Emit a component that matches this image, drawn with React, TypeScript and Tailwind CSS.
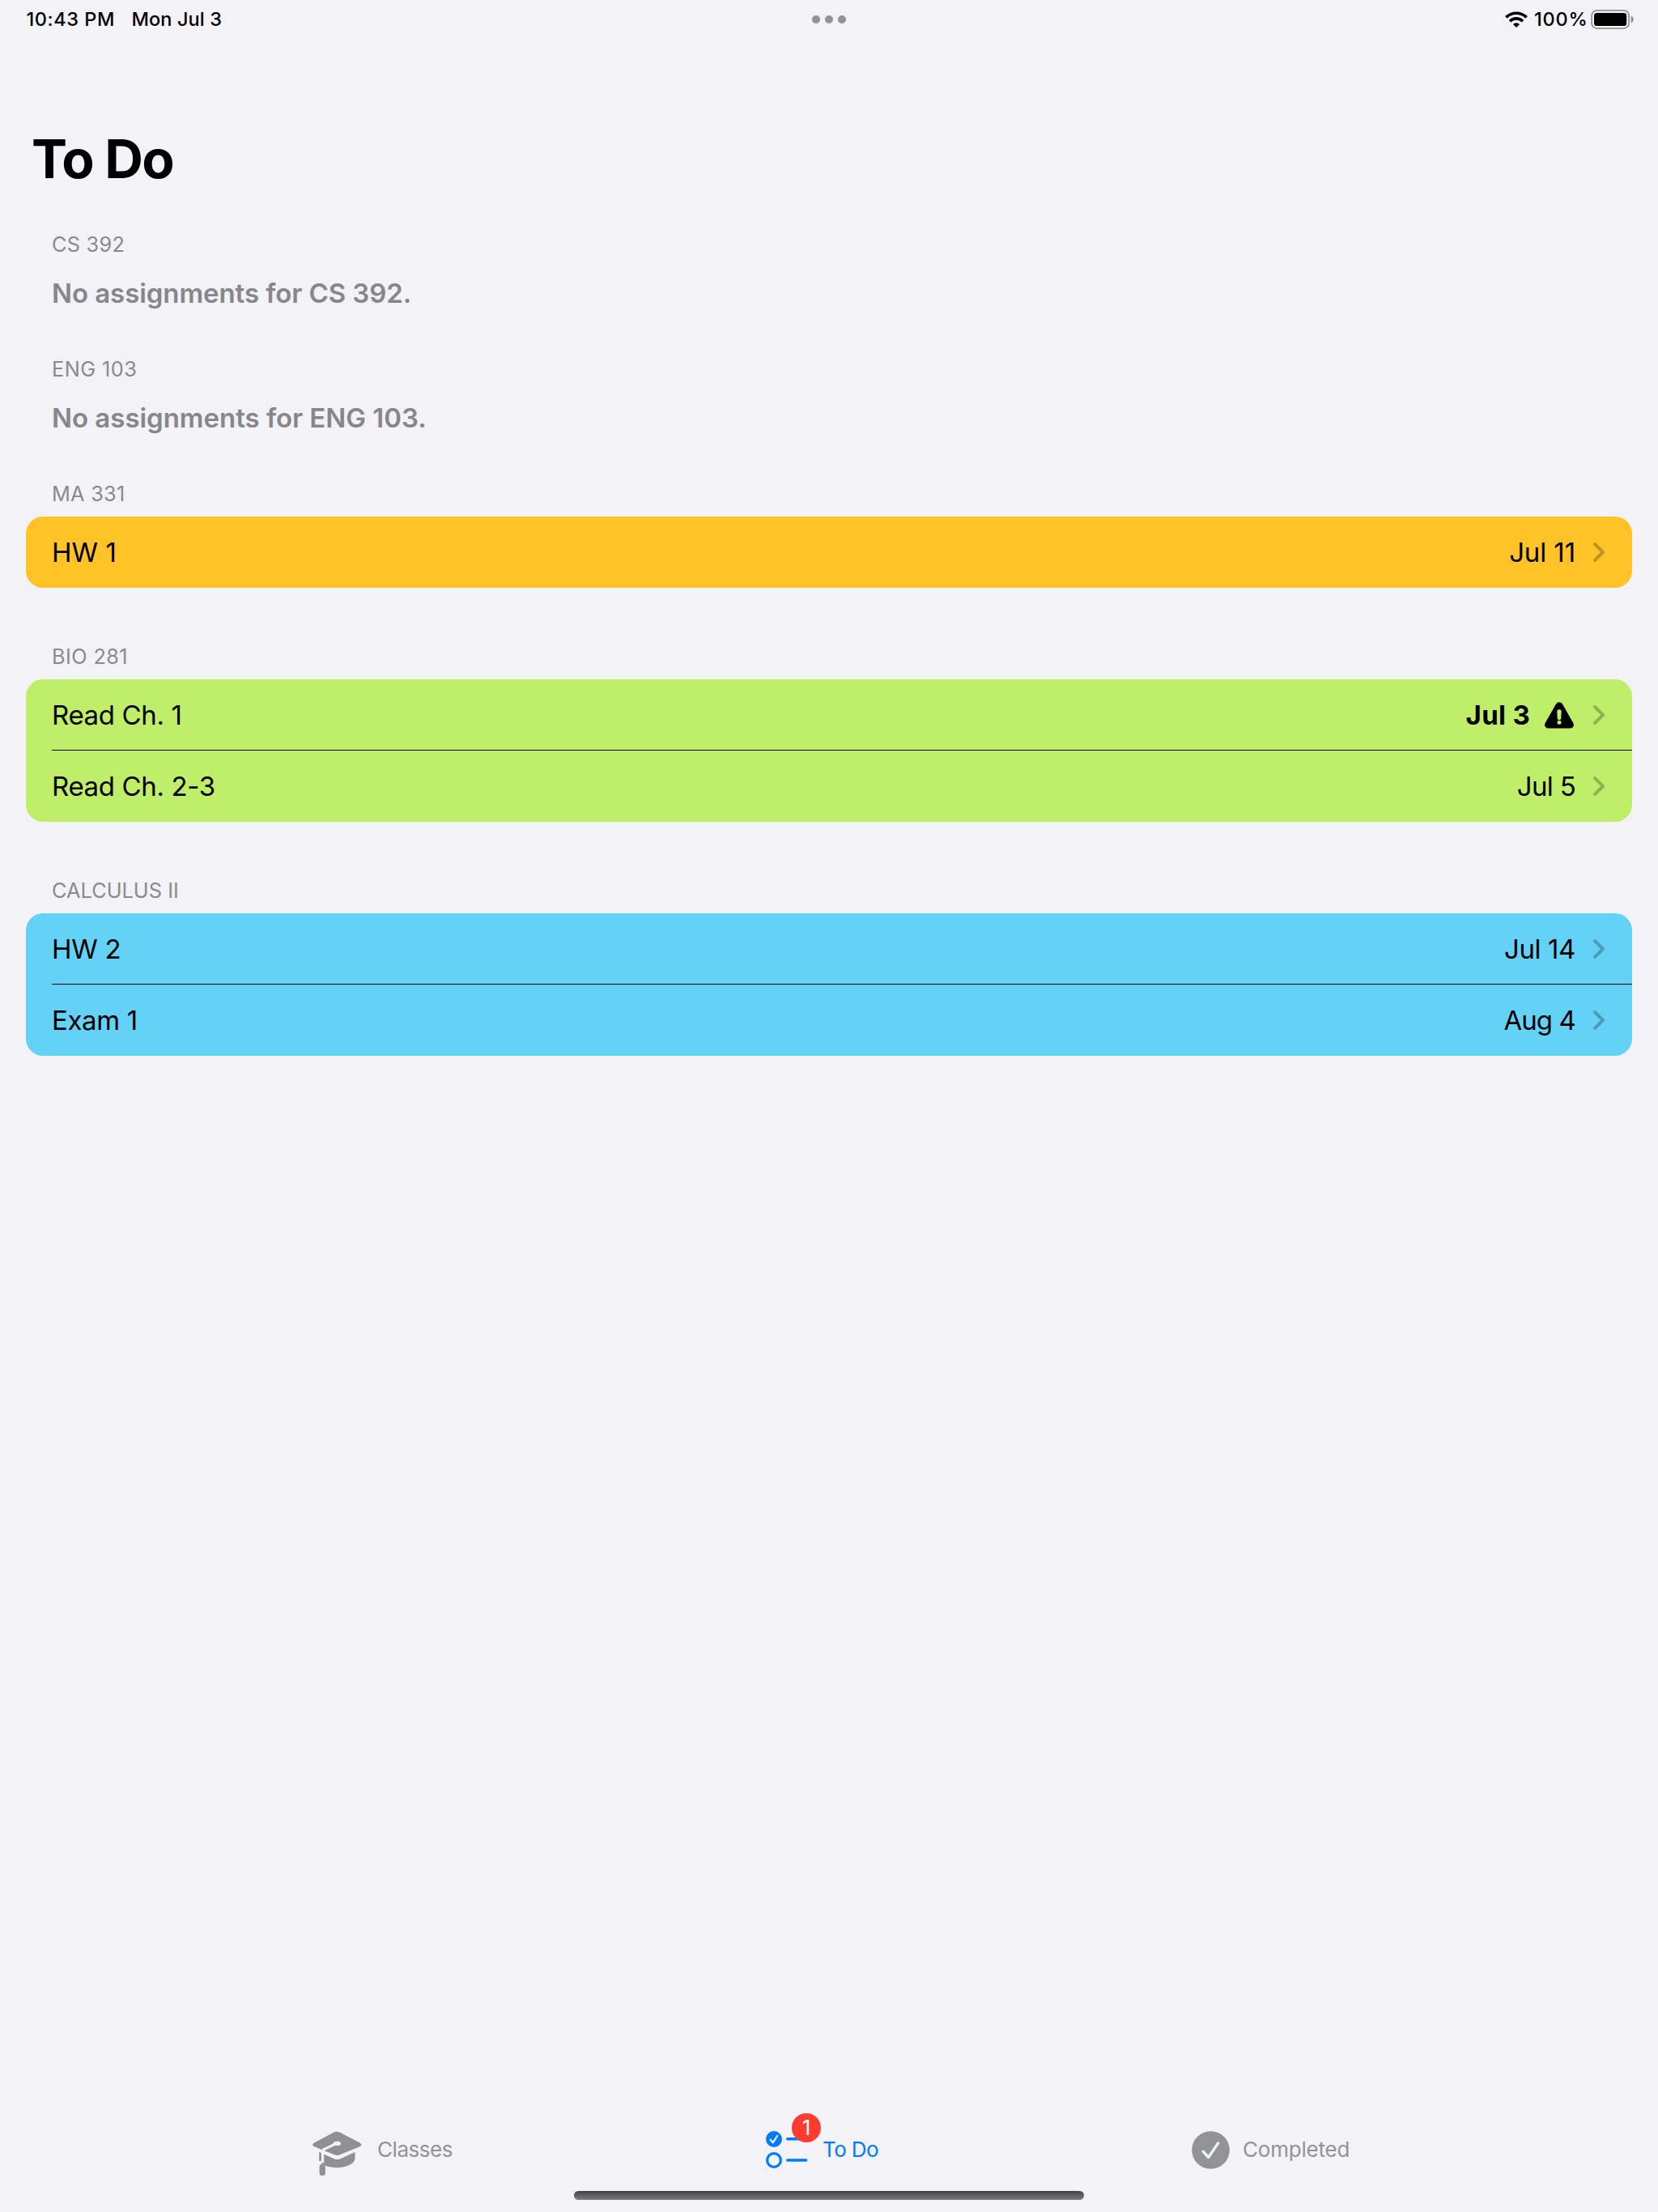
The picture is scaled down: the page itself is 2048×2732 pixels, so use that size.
type Item = {
  name: string;
  nameTracking: string;
  due: string;
  dueTracking: string;
  urgent?: boolean;
};

type Course = {
  code: string;
  codeTracking: string;
  color?: string;
  emptyTracking?: string;
  items: Item[];
};

const courses: Course[] = [
  { code: "CS 392", codeTracking: "tracking-[0.25px]", emptyTracking: "tracking-[-0.08px]", items: [] },
  { code: "ENG 103", codeTracking: "tracking-[0.45px]", emptyTracking: "tracking-[-0.03px]", items: [] },
  {
    code: "MA 331",
    codeTracking: "tracking-[0.25px]",
    color: "bg-[#ffc227]",
    items: [
      { name: "HW 1", nameTracking: "tracking-[0.1px]", due: "Jul 11", dueTracking: "tracking-[-0.1px]" },
    ],
  },
  {
    code: "BIO 281",
    codeTracking: "tracking-[0.4px]",
    color: "bg-[#bfee69]",
    items: [
      { name: "Read Ch. 1", nameTracking: "tracking-[-0.35px]", due: "Jul 3", dueTracking: "tracking-[0.3px]", urgent: true },
      { name: "Read Ch. 2-3", nameTracking: "tracking-[-0.36px]", due: "Jul 5", dueTracking: "tracking-[-0.7px]" },
    ],
  },
  {
    code: "CALCULUS II",
    codeTracking: "tracking-[0.04px]",
    color: "bg-[#64d1f7]",
    items: [
      { name: "HW 2", nameTracking: "tracking-[-0.25px]", due: "Jul 14", dueTracking: "tracking-[-0.4px]" },
      { name: "Exam 1", nameTracking: "tracking-[-0.37px]", due: "Aug 4", dueTracking: "tracking-[-0.9px]" },
    ],
  },
];

function WifiIcon() {
  return (
    <svg width="28" height="20" viewBox="0 0 28 20" fill="none" stroke="#000" strokeWidth="3.6">
      <path d="M1.4 7.4a18 18 0 0 1 25.2 0" />
      <path d="M6 12.2a11.4 11.4 0 0 1 16 0" />
      <path d="M14 20l-4-4.1a5.8 5.8 0 0 1 8 0z" fill="#000" stroke="none" />
    </svg>
  );
}

function BatteryIcon() {
  return (
    <svg width="54" height="24" viewBox="0 0 54 24">
      <rect x="1.1" y="0.9" width="46" height="22.2" rx="6.4" fill="none" stroke="#949498" strokeWidth="1.8" />
      <rect x="4" y="4" width="40.2" height="16" rx="3.6" fill="#000" />
      <path d="M49.6 7.6c2 .6 3.3 2.3 3.3 4.4s-1.3 3.8-3.3 4.4z" fill="#949498" />
    </svg>
  );
}

function Chevron() {
  return (
    <svg width="16" height="26" viewBox="0 0 16 26" fill="none" stroke="#000" strokeOpacity="0.25" strokeWidth="3.9" strokeLinecap="round" strokeLinejoin="round">
      <path d="M3 3l10 10-10 10" />
    </svg>
  );
}

function WarningIcon() {
  return (
    <svg width="36" height="33" viewBox="0 0 36 33">
      <path
        d="M18 .3c1.8 0 3.2.9 4.1 2.5l13.1 23c.5.9.7 1.7.7 2.5 0 2.5-1.8 4.3-4.5 4.3H4.6C1.9 32.6.1 30.8.1 28.3c0-.8.2-1.6.7-2.5l13.1-23C14.8 1.2 16.2.3 18 .3z"
        fill="#000"
      />
      <path d="M15.3 11.6c0-1.5 1.1-2.3 2.7-2.3s2.7.8 2.7 2.3l-.4 8.3c-.1 1.4-.9 2.1-2.3 2.1s-2.2-.7-2.3-2.1z" fill="#bfee69" />
      <circle cx="18" cy="25.2" r="2.5" fill="#bfee69" />
    </svg>
  );
}

function GraduationCap() {
  return (
    <svg width="62" height="56" viewBox="0 0 62 56">
      <path d="M9.2 24v12.5C12.5 42 21 45.2 31.5 45.2c11.5 0 22-5 22-11.7V24z" fill="#8f9094" />
      <path
        d="M27 1.8c2.8-1.3 5.2-1.3 8 0l24.3 12.6c3.2 1.7 3.2 3.9 0 5.6L35.5 31.3c-2.8 1.3-5.2 1.3-8 0L3.3 20.1c-3.2-1.7-3.2-4 0-5.7z"
        fill="#8f9094"
        stroke="#f2f2f7"
        strokeWidth="5.4"
      />
      <path
        d="M27 1.8c2.8-1.3 5.2-1.3 8 0l24.3 12.6c2.7 1.4 2.7 3.4 0 4.8L35.5 29c-2.8 1.3-5.2 1.3-8 0L3.3 19.3c-2.7-1.5-2.7-3.5 0-4.9z"
        fill="#8f9094"
      />
      <path d="M30 15.6L13.6 23.4" fill="none" stroke="#f2f2f7" strokeWidth="3" />
      <ellipse cx="31.3" cy="15.4" rx="4.7" ry="2.7" fill="#f2f2f7" />
      <path d="M11.9 23.8l3.3-1.5v19.2h-3.3z" fill="#f2f2f7" />
      <path d="M13.3 38l2.6 4h-5z" fill="#8f9094" />
      <path d="M8 37l4.500 0V46H8z" fill="#f2f2f7" />
      <rect x="9.6" y="41" width="7.2" height="14" rx="3" fill="#8f9094" />
    </svg>
  );
}

function ChecklistIcon() {
  return (
    <svg width="52" height="48" viewBox="0 0 52 48" fill="none" strokeLinecap="round" strokeLinejoin="round">
      <circle cx="10" cy="10" r="10" fill="#007bff" />
      <path d="M5.7 10.7l3 3.7 5.400-8.400" stroke="#f2f2f7" strokeWidth="2.2" />
      <circle cx="10" cy="36" r="8.4" stroke="#007bff" strokeWidth="3.2" />
      <path d="M26.7 9.8h23M26.7 36h23" stroke="#007bff" strokeWidth="3.4" />
    </svg>
  );
}

function CheckCircle() {
  return (
    <svg width="47" height="47" viewBox="0 0 47 47" fill="none" strokeLinecap="round" strokeLinejoin="round">
      <circle cx="23.5" cy="23.5" r="23.3" fill="#929398" />
      <path d="M14.2 25.3l6.5 7.2 12-17.6" stroke="#f2f2f7" strokeWidth="3.4" />
    </svg>
  );
}

function StatusBar() {
  return (
    <header className="grid h-12 grid-cols-[1fr_auto_1fr] items-center text-[23.5px] leading-none font-medium">
      <div className="flex items-center pl-[32.5px]">
        <span className="w-[130px] whitespace-nowrap tracking-[0.55px]">10:43 PM</span>
        <span className="whitespace-nowrap tracking-[0.1px]">Mon Jul 3</span>
      </div>
      <div className="flex gap-1.5">
        <i className="size-[10px] rounded-full bg-[#929297]" />
        <i className="size-[10px] rounded-full bg-[#929297]" />
        <i className="size-[10px] rounded-full bg-[#929297]" />
      </div>
      <div className="flex items-center justify-end pr-[29px]">
        <WifiIcon />
        <span className="ml-[8px] w-[70px] tracking-[0.8px]">100%</span>
        <BatteryIcon />
      </div>
    </header>
  );
}

function Row({ item, divided }: { item: Item; divided: boolean }) {
  return (
    <li
      className={`flex h-[88px] items-center pl-8 text-[33px] leading-10 text-black ${
        divided ? "relative before:absolute before:-top-px before:right-0 before:left-8 before:h-px before:bg-black" : ""
      }`}
    >
      <span className={`flex-1 ${item.nameTracking}`}>{item.name}</span>
      <span className={`${item.dueTracking} ${item.urgent ? "mr-[18px] font-bold" : "mr-[21px]"}`}>{item.due}</span>
      {item.urgent && (
        <span className="mr-[23px]">
          <WarningIcon />
        </span>
      )}
      <span className="mr-[33px]">
        <Chevron />
      </span>
    </li>
  );
}

function Section({ course }: { course: Course }) {
  return (
    <section>
      <h2 className={`h-12 pl-8 text-[25.3px] leading-10 text-[#8a8a8e] ${course.codeTracking}`}>{course.code}</h2>
      {course.color ? (
        <ul className={`mb-[65px] overflow-hidden rounded-[21px] ${course.color}`}>
          {course.items.map((item, index) => (
            <Row key={item.name} item={item} divided={index > 0} />
          ))}
        </ul>
      ) : (
        <p className={`mb-[42px] flex h-16 items-center pl-8 text-[33px] leading-[50px] font-semibold text-[#87868b] ${course.emptyTracking}`}>
          No assignments for {course.code}.
        </p>
      )}
    </section>
  );
}

function TabBar() {
  return (
    <nav className="flex h-[72px] items-center pl-[385px] text-[26px] leading-none text-[#929398]">
      <div className="flex w-[561px] items-center">
        <div className="relative top-[5px] h-14">
          <GraduationCap />
        </div>
        <span className="ml-[19px] tracking-[-0.45px]">Classes</span>
      </div>
      <div className="flex w-[525.5px] items-center text-[#007bff]">
        <div className="relative top-px">
          <ChecklistIcon />
          <span className="absolute -top-[22px] left-[32px] flex size-9 items-center justify-center rounded-full bg-[#ff3b30] text-[26px] text-white">1</span>
        </div>
        <span className="ml-[18px] tracking-[-0.6px]">To Do</span>
      </div>
      <div className="flex items-center">
        <CheckCircle />
        <span className="ml-[16.5px] tracking-[-0.2px]">Completed</span>
      </div>
    </nav>
  );
}

export default function App() {
  return (
    <div className="flex h-[2732px] w-[2048px] flex-col bg-[#f2f2f7] font-['Inter',sans-serif] text-black">
      <StatusBar />
      <h1 className="mt-[108px] mb-[46px] pl-[39px] text-[66px] leading-[80px] font-bold tracking-[-1.6px]">To Do</h1>
      <main className="flex-1 px-8">
        {courses.map((course) => (
          <Section key={course.code} course={course} />
        ))}
      </main>
      <TabBar />
      <div className="mx-auto my-[15px] h-[11px] w-[630px] rounded-full bg-linear-to-b from-[#444445] to-[#7b7b7d]" />
    </div>
  );
}
